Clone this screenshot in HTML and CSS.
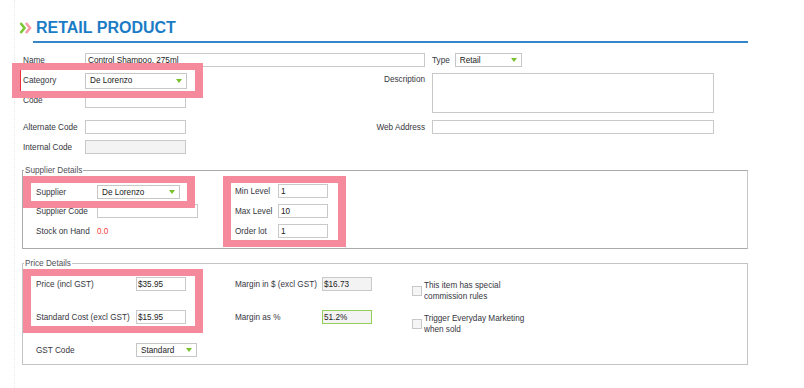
FILE: index.html
```html
<!DOCTYPE html>
<html lang="en">
<head>
  <meta charset="UTF-8">
  <title>Retail Product</title>
  <link rel="stylesheet" href="styles.css">
</head>
<body>
  <div class="page">
    <h1 class="title">
      <svg class="title-icon" width="13" height="12" viewBox="0 0 13 12">
        <polyline points="1.5,1 5.5,6 1.5,11" fill="none" stroke="#7cc735" stroke-width="2.6"/>
        <polyline points="7,1 11,6 7,11" fill="none" stroke="#f49aa9" stroke-width="2.6"/>
      </svg>
      RETAIL PRODUCT
    </h1>
    <div class="title-rule"></div>

    <div class="main">
      <label class="lbl name-lbl">Name</label>
      <input class="field name-field" value="Control Shampoo, 275ml">
      <div class="type-cell">
        <label>Type</label>
        <span class="select type-select"><select><option>Retail</option></select></span>
      </div>

      <div class="hl category-row">
        <label>Category</label>
        <span class="select category-select"><select><option>De Lorenzo</option></select></span>
      </div>
      <label class="lbl desc-lbl">Description</label>
      <textarea class="desc"></textarea>

      <label class="lbl code-lbl">Code</label>
      <input class="field short code-field">

      <label class="lbl alt-lbl">Alternate Code</label>
      <input class="field short alt-field">
      <label class="lbl web-lbl">Web Address</label>
      <input class="field web-field">

      <label class="lbl internal-lbl">Internal Code</label>
      <input class="field short readonly internal-field" readonly>
    </div>

    <fieldset class="box">
      <legend>Supplier Details</legend>
      <div class="supplier-body">
        <div class="supplier-left">
          <div class="hl supplier-row">
            <label>Supplier</label>
            <span class="select supplier-select"><select><option>De Lorenzo</option></select></span>
          </div>
          <div class="row">
            <label>Supplier Code</label>
            <input class="field short">
          </div>
          <div class="row">
            <label>Stock on Hand</label>
            <span class="stock">0.0</span>
          </div>
        </div>
        <div class="hl levels">
          <div class="level-row"><label>Min Level</label><input class="field level" value="1"></div>
          <div class="level-row"><label>Max Level</label><input class="field level" value="10"></div>
          <div class="level-row"><label>Order lot</label><input class="field level" value="1"></div>
        </div>
      </div>
    </fieldset>

    <fieldset class="box price-box">
      <legend>Price Details</legend>
      <div class="price-top">
        <div class="hl price-group">
          <div class="price-row"><label>Price (incl GST)</label><input class="field money" value="$35.95"></div>
          <div class="price-row"><label>Standard Cost (excl GST)</label><input class="field money" value="$15.95"></div>
        </div>
        <div class="margin-group">
          <div class="price-row"><label>Margin in $ (excl GST)</label><input class="field money readonly" value="$16.73" readonly></div>
          <div class="price-row"><label>Margin as %</label><input class="field money readonly good" value="51.2%" readonly></div>
        </div>
        <div class="checks">
          <label class="check"><input type="checkbox"><span>This item has special commission rules</span></label>
          <label class="check"><input type="checkbox"><span>Trigger Everyday Marketing when sold</span></label>
        </div>
      </div>
      <div class="gst-row">
        <label>GST Code</label>
        <span class="select gst-select"><select><option>Standard</option></select></span>
      </div>
    </fieldset>
  </div>
</body>
</html>
```

FILE: styles.css
```css
* {
  box-sizing: border-box;
}

body {
  margin: 0;
  background-color: #fff;
  font-family: "Liberation Sans", Arial, sans-serif;
  font-size: 8.2px;
  color: #363640;
}

label {
  line-height: 11px;
  white-space: nowrap;
}

.page {
  width: 734px;
  min-height: 388px;
  margin-left: 14px;
  padding: 19px 0 0 5px;
  border-left: 1px dotted #e8e8e8;
}

/* header */
.title {
  display: flex;
  align-items: center;
  gap: 4px;
  margin: 0 0 0 -1px;
  font-size: 16px;
  line-height: 18px;
  font-weight: bold;
  color: #1b7cc6;
}

.title-rule {
  height: 2px;
  margin: 4px 0 0 13px;
  background-color: #3585cb;
}

/* inputs */
.field {
  height: 14px;
  padding: 0 2px;
  border: 1px solid #c9c9c9;
  background-color: #fff;
  font: inherit;
  color: #222;
  outline: none;
}

.field.short {
  width: 101px;
}

.field.readonly {
  background-color: #f3f3f3;
}

.field.good {
  border-color: #93cf58;
}

.select {
  position: relative;
  display: inline-block;
  height: 14px;
}

.select select {
  appearance: none;
  width: 100%;
  height: 100%;
  margin: 0;
  padding: 0 0 0 4px;
  border: 1px solid #c6c6c6;
  border-radius: 0;
  background-color: #fff;
  font: inherit;
  color: #222;
}

.select::after {
  content: '';
  position: absolute;
  right: 5px;
  top: 50%;
  margin-top: -2px;
  border-left: 3.5px solid transparent;
  border-right: 3.5px solid transparent;
  border-top: 4px solid #78c12d;
}

/* highlighted areas */
.hl {
  position: relative;
  z-index: 1;
  background-color: #fff;
  box-shadow: 1px 0 0 7px #f48a9c, -1px 0 0 7px #f48a9c;
}

/* top section */
.main {
  display: grid;
  grid-template-columns: 58px 208px 125px 282px;
  grid-template-rows: 16px 25px 15px 9px 20px 20px;
  column-gap: 7px;
  align-items: center;
  margin-top: 9px;
}

.lbl {
  padding-left: 3px;
}

.name-lbl { grid-area: 1 / 1; }
.name-field { grid-area: 1 / 2 / 2 / 4; }

.type-cell {
  grid-area: 1 / 4;
  display: flex;
  align-items: center;
  gap: 5px;
}

.type-select {
  width: 67px;
}

.category-row {
  grid-area: 2 / 1 / 3 / 3;
  justify-self: start;
  display: flex;
  align-items: center;
  width: 175px;
  height: 21px;
  padding-left: 2px;
  border-left: 1px solid #e8323c;
}

.category-row label {
  width: 62px;
}

.category-select {
  width: 102px;
  height: 16px;
}

.desc-lbl {
  grid-area: 2 / 3;
  justify-self: end;
  align-self: start;
  margin-top: 6px;
}

.desc {
  grid-area: 2 / 4 / 5 / 5;
  align-self: start;
  height: 40px;
  margin: 5px 0 0;
  border: 1px solid #c9c9c9;
  resize: none;
}

.code-lbl { grid-area: 3 / 1; }
.code-field { grid-area: 3 / 2; }
.alt-lbl { grid-area: 5 / 1; }
.alt-field { grid-area: 5 / 2; }

.web-lbl {
  grid-area: 5 / 3;
  justify-self: end;
}

.web-field {
  grid-area: 5 / 4;
  width: 100%;
}

.internal-lbl { grid-area: 6 / 1; }
.internal-field { grid-area: 6 / 2; }

/* fieldsets */
.box {
  width: 726px;
  min-width: 0;
  margin: 8px 0 0 2px;
  padding: 7px 8px;
  border: 1px solid #aaa;
  border-right-color: #c8c8c8;
}

.box legend {
  margin-left: -7px;
  padding: 0 1px;
  line-height: 11px;
  color: #505058;
}

.price-box {
  margin-top: 9px;
  border-color: #c4c4c4;
}

/* supplier */
.supplier-body {
  display: flex;
  align-items: flex-start;
  gap: 33px;
}

.supplier-row {
  display: flex;
  align-items: center;
  width: 156px;
  height: 18px;
  padding-left: 5px;
}

.supplier-row label,
.row label {
  width: 61px;
}

.supplier-select {
  width: 83px;
}

.row {
  display: flex;
  align-items: center;
  height: 20px;
  padding-left: 5px;
}

.stock {
  color: #ef3b3b;
}

.levels {
  display: flex;
  flex-direction: column;
  gap: 6px;
  padding: 1px 10px 2px 4px;
}

.level-row {
  display: flex;
  align-items: center;
}

.level-row label {
  width: 43px;
}

.field.level {
  width: 50px;
}

/* price */
.price-top {
  display: flex;
  align-items: flex-start;
}

.price-group,
.margin-group {
  display: flex;
  flex-direction: column;
  gap: 19px;
}

.price-group {
  padding: 1px 9px 2px 5px;
}

.price-group label {
  width: 100px;
}

.margin-group {
  margin-left: 36px;
  padding: 1px 0 0 4px;
}

.margin-group label {
  width: 87px;
}

.price-row {
  display: flex;
  align-items: center;
}

.field.money {
  width: 50px;
  padding-left: 1px;
}

.checks {
  display: flex;
  flex-direction: column;
  gap: 11px;
  margin: 0 0 -9px 40px;
  padding-top: 4px;
}

.check {
  display: flex;
  align-items: center;
  gap: 2px;
}

.check input {
  appearance: none;
  width: 10px;
  height: 10px;
  margin: 0;
  border: 1px solid #c8c8c8;
  background-color: #f5f5f5;
}

.check span {
  width: 104px;
  white-space: normal;
}

.gst-row {
  display: flex;
  align-items: center;
  margin-top: 17px;
  padding-left: 5px;
}

.gst-row label {
  width: 100px;
}

.gst-select {
  width: 61px;
}
```
